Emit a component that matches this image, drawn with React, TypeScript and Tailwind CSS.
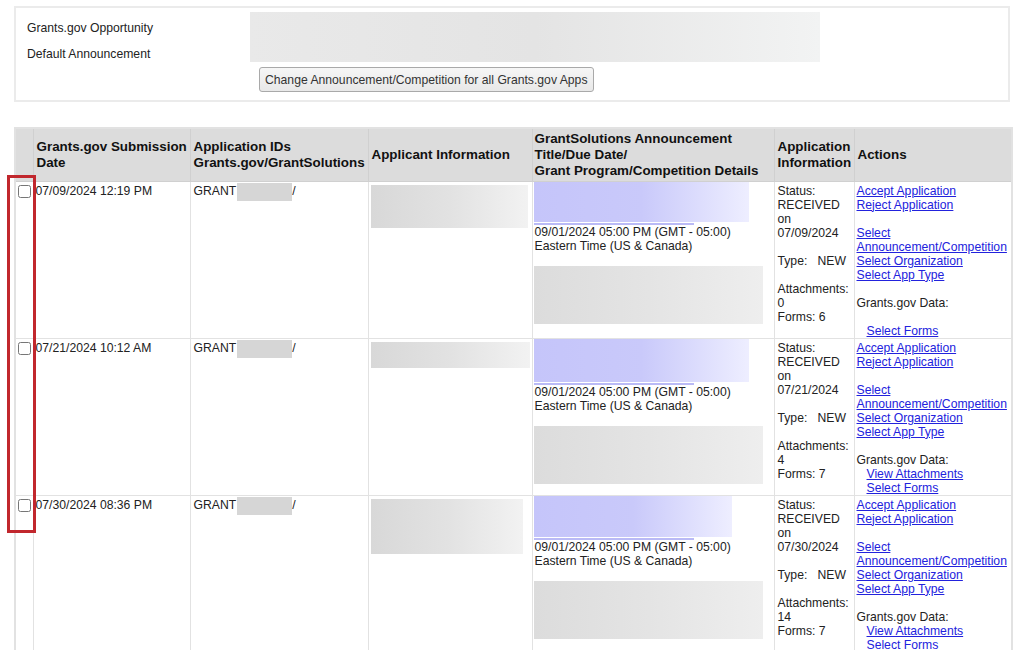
import React from 'react';

type Row = {
  date: string;
  received: string;
  attachments: string;
  forms: string;
  viewAttachments: boolean;
  applicantH: string;
  applicantW: string;
  blueH: string;
  blueW: string;
};

const rows: Row[] = [
  { date: '07/09/2024 12:19 PM', received: '07/09/2024', attachments: '0', forms: '6', viewAttachments: false, applicantH: 'h-[43px]', applicantW: 'w-[157px]', blueH: 'h-[40px]', blueW: 'w-[215px]' },
  { date: '07/21/2024 10:12 AM', received: '07/21/2024', attachments: '4', forms: '7', viewAttachments: true, applicantH: 'h-[26px]', applicantW: 'w-[159px]', blueH: 'h-[43px]', blueW: 'w-[215px]' },
  { date: '07/30/2024 08:36 PM', received: '07/30/2024', attachments: '14', forms: '7', viewAttachments: true, applicantH: 'h-[55px]', applicantW: 'w-[152px]', blueH: 'h-[41px]', blueW: 'w-[198px]' },
];

const link = 'underline text-[#2222dd]';

function Blank() {
  return <div className="h-[14px]" />;
}

export default function App() {
  return (
    <div className="relative min-h-screen bg-white text-[12.2px] leading-[14px] text-[#222]" style={{ fontFamily: '"Liberation Sans", Arial, sans-serif' }}>
      {/* Top settings box */}
      <div className="pt-[6px] px-[14px]">
        <div className="border-2 border-[#ebebeb] h-[96px] grid grid-cols-[223px_1fr] grid-rows-[26px_26px_1fr] pl-[11px]">
          <div className="flex items-center pt-[14px]">Grants.gov Opportunity</div>
          <div className="row-span-2 pt-[4px]">
            <div className="h-[50px] w-[570px] bg-gradient-to-r from-[#e9e9e9] via-[#e4e4e4] to-[#f2f3f3]" />
          </div>
          <div className="flex items-center pt-[14px]">Default Announcement</div>
          <div className="col-start-2 pl-[9px] pt-[7px]">
            <button className="h-[25px] px-[5px] rounded-[3px] border border-[#a9a9a9] bg-gradient-to-b from-[#f6f6f6] to-[#e8e8e8] text-[12.2px] text-[#333]">
              Change Announcement/Competition for all Grants.gov Apps
            </button>
          </div>
        </div>
      </div>

      {/* Applications table */}
      <div className="pt-[25px] pl-[14px]">
        <table className="table-fixed border-collapse w-[997px] border-2 border-[#e2e2e2]">
          <thead>
            <tr className="bg-[#dcdcdc] h-[53px] text-left text-[13.4px] leading-[16px] font-bold text-[#111] whitespace-nowrap">
              <th className="w-[18px] border border-[#d0d0d0]" />
              <th className="w-[157px] pl-[3px] pr-0 border border-[#d0d0d0] font-bold overflow-hidden">
                Grants.gov Submission
                <br />
                Date
              </th>
              <th className="w-[178px] px-[3px] border border-[#d0d0d0] font-bold">
                Application IDs
                <br />
                Grants.gov/GrantSolutions
              </th>
              <th className="w-[164px] px-[3px] border border-[#d0d0d0] font-bold">Applicant Information</th>
              <th className="w-[242px] px-[2px] border border-[#d0d0d0] font-bold">
                GrantSolutions Announcement
                <br />
                Title/Due Date/
                <br />
                Grant Program/Competition Details
              </th>
              <th className="w-[80px] px-[3px] border border-[#d0d0d0] font-bold">
                Application
                <br />
                Information
              </th>
              <th className="w-[158px] px-[3px] border border-[#d0d0d0] font-bold">Actions</th>
            </tr>
          </thead>
          <tbody>
            {rows.map((r) => (
              <tr key={r.date} className="align-top">
                <td className="border border-[#e2e2e2] pt-[3px] pl-[2px]">
                  <input type="checkbox" className="m-0 w-[13px] h-[13px]" />
                </td>
                <td className="border border-[#e2e2e2] pt-[2px] pl-[2px] pr-[3px]">{r.date}</td>
                <td className="border border-[#e2e2e2] pt-[2px] px-[3px]">
                  <div className="flex items-start">
                    <span>GRANT</span>
                    <span className="mt-[-1px] ml-[1px] h-[18px] w-[55px] bg-[#d6d6d6]" />
                    <span>/</span>
                  </div>
                </td>
                <td className="border border-[#e2e2e2] pt-[3px] px-[2px]">
                  <div className={`${r.applicantH} ${r.applicantW} bg-gradient-to-r from-[#d8d8d8] via-[#e2e2e2] to-[#f2f2f2]`} />
                </td>
                <td className="border border-[#e2e2e2] pt-0 px-[1px]">
                  <div className={`${r.blueH} ${r.blueW} bg-gradient-to-r from-[#c5c5fa] via-[#c9c9fa] to-[#eeeeff]`} />
                  <div className="h-[3px] w-[160px] border-b-2 border-[#8c8cf0] opacity-60" />
                  <div className="pl-[1px]">
                    09/01/2024 05:00 PM (GMT - 05:00)
                    <br />
                    Eastern Time (US &amp; Canada)
                  </div>
                  <div className="mt-[13px] h-[58px] w-[229px] bg-gradient-to-r from-[#dcdcdc] via-[#e4e4e4] to-[#eeeeee]" />
                </td>
                <td className="border border-[#e2e2e2] pt-[2px] px-[3px]">
                  <div>Status:</div>
                  <div>RECEIVED</div>
                  <div>on</div>
                  <div>{r.received}</div>
                  <Blank />
                  <div>Type:&nbsp;&nbsp;&nbsp;NEW</div>
                  <Blank />
                  <div>Attachments:</div>
                  <div>{r.attachments}</div>
                  <div>Forms: {r.forms}</div>
                </td>
                <td className="border border-[#e2e2e2] pt-[2px] pl-[2px] pr-0 whitespace-nowrap">
                  <div><a href="#" className={link}>Accept Application</a></div>
                  <div><a href="#" className={link}>Reject Application</a></div>
                  <Blank />
                  <div><a href="#" className={link}>Select</a></div>
                  <div><a href="#" className={link}>Announcement/Competition</a></div>
                  <div><a href="#" className={link}>Select Organization</a></div>
                  <div><a href="#" className={link}>Select App Type</a></div>
                  <Blank />
                  <div>Grants.gov Data:</div>
                  {r.viewAttachments ? (
                    <div className="pl-[10px]"><a href="#" className={link}>View Attachments</a></div>
                  ) : (
                    <Blank />
                  )}
                  <div className="pl-[10px]"><a href="#" className={link}>Select Forms</a></div>
                </td>
              </tr>
            ))}
          </tbody>
        </table>
      </div>

      {/* Highlight annotation around the checkboxes */}
      <div className="absolute left-[7px] top-[175px] w-[29px] h-[358px] border-[3px] border-[#c1272d] pointer-events-none" />
    </div>
  );
}
